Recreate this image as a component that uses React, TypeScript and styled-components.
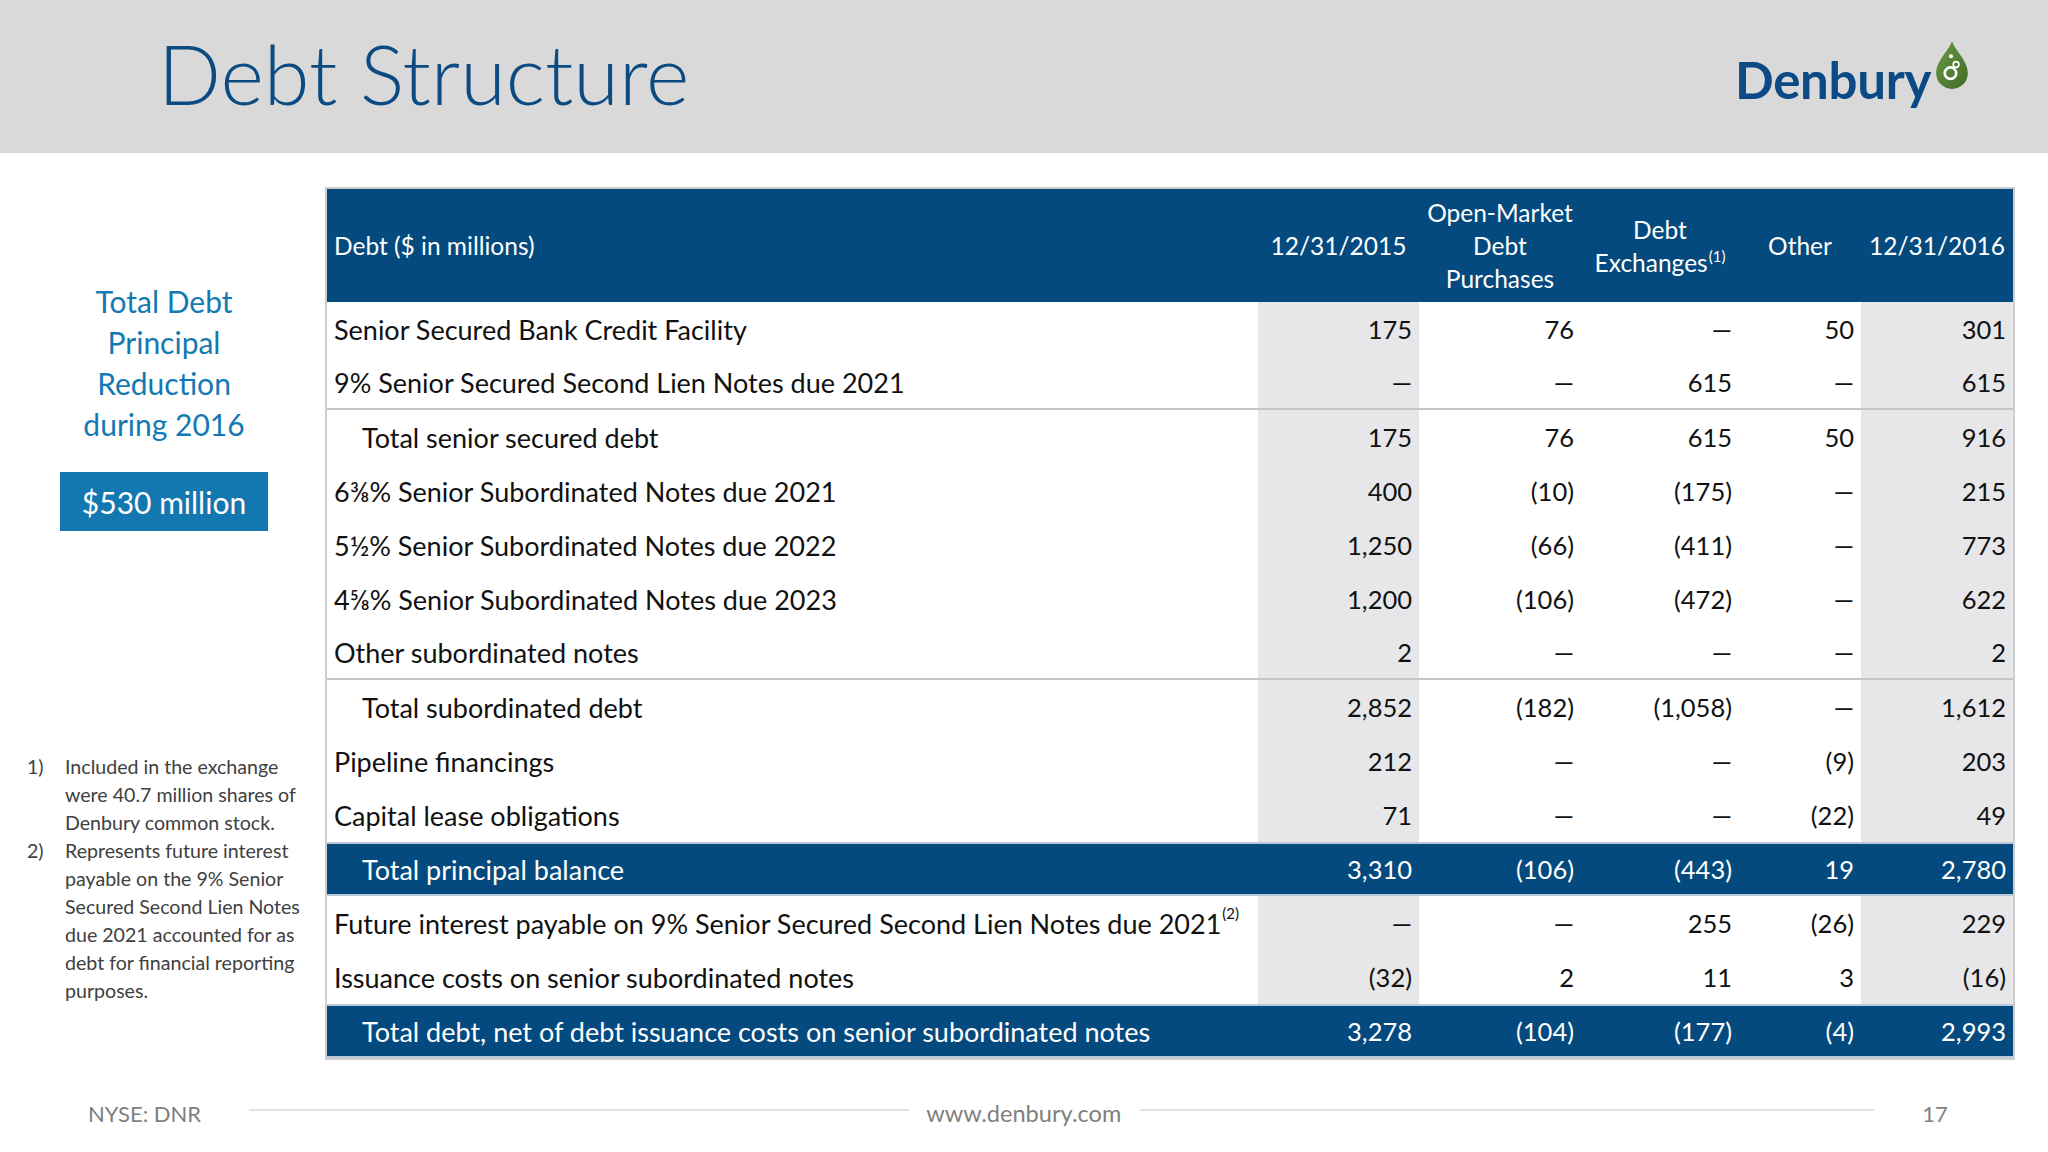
import React from "react";
import styled, { createGlobalStyle, css } from "styled-components";

const GlobalStyle = createGlobalStyle`
  html, body {
    margin: 0;
    padding: 0;
    background: #ffffff;
  }
  body {
    font-family: Lato, "Open Sans", "Liberation Sans", sans-serif;
  }
`;

const NAVY = "#044a7e";
const SHADE = "#e7e7e9";
const COLS = "931px 161px 162px 158px 122px 152px";

const Page = styled.div`
  width: 2048px;
  height: 1152px;
  overflow: hidden;
  background: #ffffff;
`;

const TitleBar = styled.header`
  height: 153px;
  background: #d9d9d9;
  display: flex;
  align-items: flex-start;
  justify-content: space-between;
  padding: 0 80px 0 158px;
  box-sizing: border-box;
`;

const Title = styled.h1`
  margin: 0;
  padding-top: 32px;
  font-family: Lato, sans-serif;
  font-weight: 300;
  font-size: 83px;
  line-height: 1;
  color: #0b4b82;
`;

const Logo = styled.div`
  display: flex;
  align-items: flex-start;
  gap: 5px;
  padding-top: 41px;
`;

const LogoWord = styled.span`
  font-family: Lato, sans-serif;
  font-weight: 700;
  font-size: 51px;
  line-height: 1;
  letter-spacing: -0.3px;
  color: #0b4a85;
  padding-top: 13px;
`;

const Body = styled.main`
  display: flex;
  align-items: flex-start;
  height: 907px;
`;

const Aside = styled.aside`
  width: 325px;
  flex-shrink: 0;
  display: flex;
  flex-direction: column;
  align-items: center;
  padding: 128px 0 0 3px;
  box-sizing: border-box;
`;

const Highlight = styled.div`
  font-size: 30px;
  line-height: 41px;
  color: #1379b2;
  text-align: center;
`;

const AmountBadge = styled.div`
  margin-top: 27px;
  width: 208px;
  height: 59px;
  display: flex;
  align-items: center;
  justify-content: center;
  background: #1378b0;
  color: #ffffff;
  font-size: 30px;
`;

const Notes = styled.ol`
  list-style: none;
  margin: 222px 0 0 0;
  padding: 0 0 0 24px;
  align-self: stretch;
`;

const Note = styled.li`
  display: flex;
  font-size: 19.6px;
  line-height: 28px;
  color: #404040;
`;

const NoteNum = styled.span`
  width: 38px;
  flex-shrink: 0;
`;

const NoteText = styled.span`
  width: 242px;
`;

const Table = styled.section`
  margin-top: 34px;
  width: 1690px;
  border: 2px solid #cdcdcd;
  box-sizing: border-box;
  font-size: 25.5px;
  color: #111111;
`;

const HeadRow = styled.div`
  display: grid;
  grid-template-columns: ${COLS};
  height: 113px;
  background: ${NAVY};
  color: #ffffff;
  font-size: 24.5px;
  line-height: 33px;
`;

const HeadCell = styled.div<{ $left?: boolean }>`
  display: flex;
  align-items: center;
  justify-content: center;
  text-align: center;
  padding: 0 6px;
  ${(p) =>
    p.$left &&
    css`
      justify-content: flex-start;
      text-align: left;
      padding-left: 7px;
    `}
`;

const Row = styled.div<{ $total?: boolean; $divider?: boolean }>`
  display: grid;
  grid-template-columns: ${COLS};
  height: 54px;
  box-sizing: border-box;
  ${(p) =>
    p.$divider &&
    css`
      border-bottom: 2px solid #c6c6c6;
    `}
  ${(p) =>
    p.$total &&
    css`
      background: ${NAVY};
      color: #ffffff;
      border-top: 2px solid #b9c9da;
      border-bottom: 2px solid #b9c9da;
    `}
`;

const LabelCell = styled.div<{ $indent?: boolean }>`
  display: flex;
  align-items: center;
  padding-left: ${(p) => (p.$indent ? "35px" : "7px")};
  font-size: 27px;
  white-space: nowrap;
`;

const NumCell = styled.div<{ $shade?: boolean }>`
  display: flex;
  align-items: center;
  justify-content: flex-end;
  padding-right: 7px;
  background: ${(p) => (p.$shade ? SHADE : "transparent")};
`;

const Sup = styled.sup`
  font-size: 15px;
  line-height: 0;
  vertical-align: 0;
  position: relative;
  top: -10px;
  margin-left: 1px;
`;

const Footer = styled.footer`
  margin-top: 33px;
  height: 40px;
  display: flex;
  align-items: center;
  padding-left: 88px;
  font-size: 22px;
  color: #7f7f7f;
`;

const Rule = styled.div<{ $w: number }>`
  width: ${(p) => p.$w}px;
  height: 2px;
  background: #e3e3e3;
  margin: -4px 0 0 0;
`;

const FooterText = styled.span<{ $space?: string; $size?: number }>`
  margin: ${(p) => p.$space || "0"};
  font-size: ${(p) => (p.$size ? `${p.$size}px` : "inherit")};
  white-space: nowrap;
`;

const Drop = () => (
  <svg width="32" height="48" viewBox="0 0 31 47" aria-hidden="true">
    <defs>
      <linearGradient id="dropG" x1="0" y1="0" x2="1" y2="1">
        <stop offset="0" stopColor="#6a9a45" />
        <stop offset="1" stopColor="#3f6a26" />
      </linearGradient>
    </defs>
    <path
      d="M15.5 0 C13 9 0 19 0 31.5 A15.5 15.5 0 0 0 31 31.5 C31 19 18 9 15.5 0 Z"
      fill="url(#dropG)"
    />
    <circle cx="14" cy="31.5" r="5.6" fill="none" stroke="#ffffff" strokeWidth="2.6" />
    <circle cx="19.5" cy="23" r="2.8" fill="none" stroke="#ffffff" strokeWidth="1.6" />
    <circle cx="14.5" cy="15" r="2" fill="#ffffff" />
  </svg>
);

type Line = {
  label: React.ReactNode;
  values: string[];
  indent?: boolean;
  total?: boolean;
  divider?: boolean;
};

const D = "—";

const lines: Line[] = [
  { label: "Senior Secured Bank Credit Facility", values: ["175", "76", D, "50", "301"] },
  { label: "9% Senior Secured Second Lien Notes due 2021", values: [D, D, "615", D, "615"], divider: true },
  { label: "Total senior secured debt", values: ["175", "76", "615", "50", "916"], indent: true },
  { label: "6⅜% Senior Subordinated Notes due 2021", values: ["400", "(10)", "(175)", D, "215"] },
  { label: "5½% Senior Subordinated Notes due 2022", values: ["1,250", "(66)", "(411)", D, "773"] },
  { label: "4⅝% Senior Subordinated Notes due 2023", values: ["1,200", "(106)", "(472)", D, "622"] },
  { label: "Other subordinated notes", values: ["2", D, D, D, "2"], divider: true },
  { label: "Total subordinated debt", values: ["2,852", "(182)", "(1,058)", D, "1,612"], indent: true },
  { label: "Pipeline financings", values: ["212", D, D, "(9)", "203"] },
  { label: "Capital lease obligations", values: ["71", D, D, "(22)", "49"] },
  { label: "Total principal balance", values: ["3,310", "(106)", "(443)", "19", "2,780"], total: true, indent: true },
  {
    label: (
      <>
        Future interest payable on 9% Senior Secured Second Lien Notes due 2021<Sup>(2)</Sup>
      </>
    ),
    values: [D, D, "255", "(26)", "229"],
  },
  { label: "Issuance costs on senior subordinated notes", values: ["(32)", "2", "11", "3", "(16)"] },
  {
    label: "Total debt, net of debt issuance costs on senior subordinated notes",
    values: ["3,278", "(104)", "(177)", "(4)", "2,993"],
    total: true,
    indent: true,
  },
];

export default function App() {
  return (
    <Page>
      <GlobalStyle />
      <TitleBar>
        <Title>Debt Structure</Title>
        <Logo>
          <LogoWord>Denbury</LogoWord>
          <Drop />
        </Logo>
      </TitleBar>
      <Body>
        <Aside>
          <Highlight>
            Total Debt
            <br />
            Principal
            <br />
            Reduction
            <br />
            during 2016
          </Highlight>
          <AmountBadge>$530 million</AmountBadge>
          <Notes>
            <Note>
              <NoteNum>1)</NoteNum>
              <NoteText>Included in the exchange were 40.7 million shares of Denbury common stock.</NoteText>
            </Note>
            <Note>
              <NoteNum>2)</NoteNum>
              <NoteText>
                Represents future interest payable on the 9% Senior Secured Second Lien Notes due 2021
                accounted for as debt for financial reporting purposes.
              </NoteText>
            </Note>
          </Notes>
        </Aside>
        <Table>
          <HeadRow>
            <HeadCell $left>Debt ($ in millions)</HeadCell>
            <HeadCell>12/31/2015</HeadCell>
            <HeadCell>
              Open-Market
              <br />
              Debt
              <br />
              Purchases
            </HeadCell>
            <HeadCell>
              <span>
                Debt
                <br />
                Exchanges<Sup>(1)</Sup>
              </span>
            </HeadCell>
            <HeadCell>Other</HeadCell>
            <HeadCell>12/31/2016</HeadCell>
          </HeadRow>
          {lines.map((l, i) => (
            <Row key={i} $total={l.total} $divider={l.divider}>
              <LabelCell $indent={l.indent}>{l.label}</LabelCell>
              {l.values.map((v, j) => (
                <NumCell key={j} $shade={!l.total && (j === 0 || j === 4)}>
                  {v}
                </NumCell>
              ))}
            </Row>
          ))}
        </Table>
      </Body>
      <Footer>
        <FooterText>NYSE: DNR</FooterText>
        <FooterText $space="0 17px 0 48px">
          <Rule $w={660} />
        </FooterText>
        <FooterText $size={23.6}>www.denbury.com</FooterText>
        <FooterText $space="0 48px 0 19px">
          <Rule $w={734} />
        </FooterText>
        <FooterText>17</FooterText>
      </Footer>
    </Page>
  );
}
